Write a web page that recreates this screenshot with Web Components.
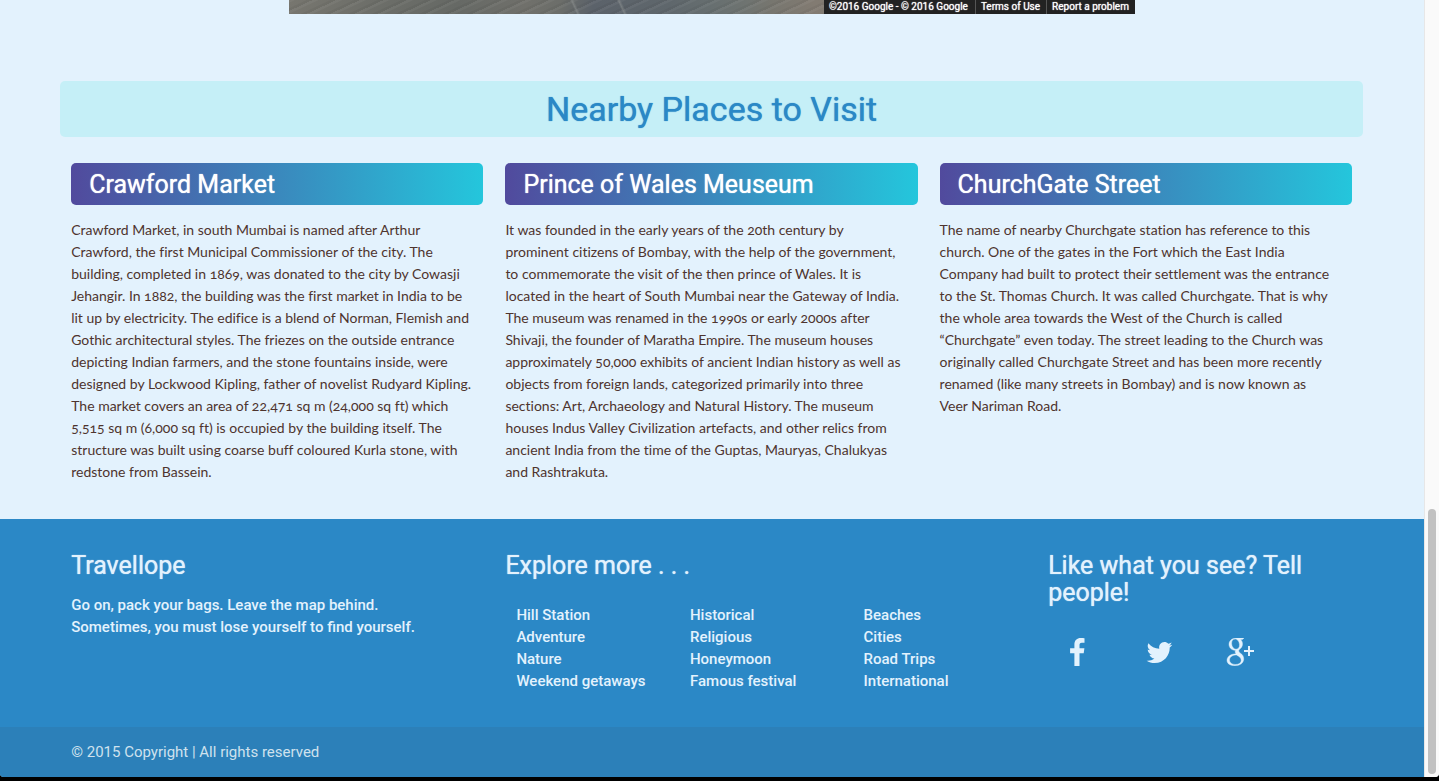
<!DOCTYPE html>
<html lang="en">
<head>
<meta charset="utf-8">
<title>Travellope</title>
<style>
html, body { margin: 0; }
body { font-family: Roboto, "Liberation Sans", sans-serif; font-size: 15px; line-height: 22px; background: #000; }
</style>
</head>
<body>
<travel-page></travel-page>

<template id="t-page">
<style>
:host { display: grid; grid-template-columns: minmax(0, 1fr) 15px; min-height: calc(100vh - 4px); background: #e3f2fd; border-radius: 0 0 4px 4px; overflow: hidden; }
main { display: flex; flex-direction: column; }
.container { width: 90%; margin: 0 auto; }
.row { margin: 0 -10px 0 -11px; }
.places { display: grid; grid-template-columns: repeat(3, minmax(0, 1fr)); margin-top: 26px; margin-bottom: 36px; }
section-title { margin-top: 67px; }
</style>
<main>
  <div class="container">
    <street-view></street-view>
    <div class="row">
      <section-title>Nearby Places to Visit</section-title>
      <div class="places">
        <place-card name="Crawford Market">Crawford Market, in south Mumbai is named after Arthur<br>Crawford, the first Municipal Commissioner of the city. The<br>building, completed in 1869, was donated to the city by Cowasji<br>Jehangir. In 1882, the building was the first market in India to be<br>lit up by electricity. The edifice is a blend of Norman, Flemish and<br>Gothic architectural styles. The friezes on the outside entrance<br>depicting Indian farmers, and the stone fountains inside, were<br>designed by Lockwood Kipling, father of novelist Rudyard Kipling.<br>The market covers an area of 22,471 sq m (24,000 sq ft) which<br>5,515 sq m (6,000 sq ft) is occupied by the building itself. The<br>structure was built using coarse buff coloured Kurla stone, with<br>redstone from Bassein.</place-card>
        <place-card name="Prince of Wales Meuseum">It was founded in the early years of the 20th century by<br>prominent citizens of Bombay, with the help of the government,<br>to commemorate the visit of the then prince of Wales. It is<br>located in the heart of South Mumbai near the Gateway of India.<br>The museum was renamed in the 1990s or early 2000s after<br>Shivaji, the founder of Maratha Empire. The museum houses<br>approximately 50,000 exhibits of ancient Indian history as well as<br>objects from foreign lands, categorized primarily into three<br>sections: Art, Archaeology and Natural History. The museum<br>houses Indus Valley Civilization artefacts, and other relics from<br>ancient India from the time of the Guptas, Mauryas, Chalukyas<br>and Rashtrakuta.</place-card>
        <place-card name="ChurchGate Street">The name of nearby Churchgate station has reference to this<br>church. One of the gates in the Fort which the East India<br>Company had built to protect their settlement was the entrance<br>to the St. Thomas Church. It was called Churchgate. That is why<br>the whole area towards the West of the Church is called<br>“Churchgate” even today. The street leading to the Church was<br>originally called Churchgate Street and has been more recently<br>renamed (like many streets in Bombay) and is now known as<br>Veer Nariman Road.</place-card>
      </div>
    </div>
  </div>
  <site-footer></site-footer>
</main>
<scroll-track></scroll-track>
</template>

<template id="t-street">
<style>
:host { display: flex; justify-content: flex-end; width: 66%; height: 14px; margin: 0 auto; font-size: 10px; line-height: 14px; text-shadow: 0 0 1px currentColor; color: #fff; overflow: hidden;
  background:
    linear-gradient(65deg, transparent 33.7%, #92969580 33.9%, transparent 34.2%, transparent 39.2%, #92969580 39.4%, transparent 39.7%),
    repeating-linear-gradient(155deg, #ffffff0c 0 2px, transparent 3px 7px, #0000000c 8px 10px),
    linear-gradient(100deg, #77766f 0, #6b6d68 12%, #666965 20%, #70706b 28%, #6c6e6a 32%, #5b626a 36%, #5f676c 45%, #676f70 50%, #6f7471 54%, #77766f 57%, #827b72 62%, #77736a 100%); }
span, a { padding: 0 6px 0 5px; background: #222; color: inherit; text-decoration: none; white-space: nowrap; }
span { padding-right: 7px; }
a { border-left: 1px solid #555; }
</style>
<span>©2016 Google - © 2016 Google</span><a href="#terms">Terms of Use</a><a href="#report">Report a problem</a>
</template>

<template id="t-title">
<style>
:host { display: block; background: #c5eff7; border-radius: 5px; }
h2 { margin: 0; font: 400 34px/56px Roboto, sans-serif; color: #2b88c6; text-align: center; text-shadow: 0 0 1px currentColor; }
</style>
<h2><slot></slot></h2>
</template>

<template id="t-place">
<style>
:host { display: block; padding: 0 11px; }
h3 { margin: 0 0 14px; padding: 2px 0 0 18px; border-radius: 5px; background: linear-gradient(to right, #514a9d, #24c6dc); color: #fff; font-size: 25px; line-height: 40px; font-weight: 400; text-shadow: 0 0 1px currentColor; }
p { margin: 0; font-family: Lato, sans-serif; font-size: 14px; font-variant-ligatures: none; font-variant-numeric: oldstyle-nums; color: #4e342e; white-space: nowrap; }
</style>
<h3></h3><p><slot></slot></p>
</template>

<template id="t-footer">
<style>
:host { display: flex; flex-direction: column; flex: 1; background: #2b88c6; color: #e3f2fd; }
.container { width: 90%; margin: 0 auto; }
.cols { display: grid; grid-template-columns: 4fr 5fr 3fr; margin: 0 -10px 0 -11px; padding: 33px 0 35px; }
section { padding: 0 11px; min-width: 0; }
h4 { margin: 0; font-size: 25px; line-height: 27px; font-weight: 400; text-shadow: 0 0 1px currentColor; }
p { margin: 15px 0 0; font-weight: 500; }
.lists { display: grid; grid-template-columns: repeat(3, 1fr); margin-top: 25px; }
ul { list-style: none; margin: 0; padding: 0 0 0 11px; font-weight: 500; white-space: nowrap; }
a { color: inherit; text-decoration: none; }
.icons { display: grid; grid-template-columns: repeat(4, 1fr); justify-items: center; margin: 32px -11px 0 -12px; }
.icons a { display: block; height: 28px; }
svg { display: block; width: 28px; height: 28px; fill: currentColor; }
.copy { background: #2c80b9; color: #cfe2ee; line-height: 50px; margin-top: auto; }
</style>
<div class="container"><div class="cols">
  <section><h4>Travellope</h4><p>Go on, pack your bags. Leave the map behind.<br>Sometimes, you must lose yourself to find yourself.</p></section>
  <section><h4>Explore more . . .</h4>
    <div class="lists">
      <ul><li><a href="#hill">Hill Station</a></li><li><a href="#adventure">Adventure</a></li><li><a href="#nature">Nature</a></li><li><a href="#weekend">Weekend getaways</a></li></ul>
      <ul><li><a href="#historical">Historical</a></li><li><a href="#religious">Religious</a></li><li><a href="#honeymoon">Honeymoon</a></li><li><a href="#festival">Famous festival</a></li></ul>
      <ul><li><a href="#beaches">Beaches</a></li><li><a href="#cities">Cities</a></li><li><a href="#road">Road Trips</a></li><li><a href="#international">International</a></li></ul>
    </div>
  </section>
  <section><h4>Like what you see? Tell people!</h4>
    <div class="icons">
      <a href="#facebook" aria-label="Facebook"><svg viewBox="0 0 28 28"><path d="M21.500 .3V4.700H18.900C16.900 4.700 16.500 5.700 16.500 7.100V10.200H21.400L20.700 15.200H16.500V28H11.400V15.200H7.100V10.200H11.400V6.600C11.400 2.400 14 .1 17.700 .1C19.500 .1 21 .2 21.500 .3Z"/></svg></a>
      <a href="#twitter" aria-label="Twitter"><svg viewBox="0 0 28 28"><path d="M27.300 6.700c-.7 1-1.600 1.900-2.600 2.700v.7c0 7-5.300 15-15 15-3 0-5.800-.9-8.100-2.400 2.800.3 5.600-.5 7.800-2.200-2.300-.1-4.300-1.600-4.900-3.700.8.1 1.600.1 2.400-.1-2.400-.5-4.200-2.700-4.200-5.200.7.400 1.500.7 2.400.7C2.700 10.600 2 7.700 3.400 5.200c2.600 3.200 6.500 5.300 10.900 5.500C13.500 7.300 16 4.100 19.400 4.100c1.500 0 2.900.6 3.900 1.700 1.200-.2 2.300-.7 3.300-1.300-.4 1.200-1.200 2.300-2.300 2.900 1.100-.1 2.100-.4 3-.7Z"/></svg></a>
      <a href="#google-plus" aria-label="Google plus"><svg viewBox="0 0 28 28"><path stroke="currentColor" stroke-width=".4" fill-rule="evenodd" d="M18 0H10.500C6.200 0 3 2.800 3 6.300c0 3.400 2.600 6 6.500 6-.6 1.500-.3 2.600.6 3.500C5 15.900 1 18.500 1 22.300c0 3.300 3 5.400 7.700 5.400 5.700 0 9-3 9-6.700 0-2.800-1-4.200-3.600-6.100-1.600-1.200-2-2.400-.4-3.800C15.400 9.800 16.500 8.200 16.500 5.900c0-1.900-.7-3.400-2.100-4.500h2ZM9.200 1.100c2.200 0 4 2.300 4.300 5.400.2 2.900-1.200 4.700-3.500 4.700S5.900 8.900 5.600 5.800C5.400 3 6.800 1.100 9.200 1.100ZM10.500 17c3 1.500 4.700 3 4.700 5.300 0 2.500-2 4.200-5.800 4.200-3.500 0-5.900-1.900-5.900-4.500C3.500 19 6.500 17 10.500 17Z"/><path d="M22 8h2v4H28v2h-4V18h-2v-4h-4v-2h4Z"/></svg></a>
    </div>
  </section>
</div></div>
<div class="copy"><div class="container">© 2015 Copyright | All rights reserved</div></div>
</template>

<template id="t-scroll">
<style>
:host { display: grid; grid-template-rows: 509fr 265fr 3px; background: #fafafa; border-left: 1px solid #e7e7e7; box-sizing: border-box; padding: 0 3px; }
div { grid-row: 2; background: #c1c1c1; border-radius: 4px; }
</style>
<div></div>
</template>

<script>
const define = (name, id, setup) => customElements.define(name, class extends HTMLElement {
  constructor() {
    super();
    this.attachShadow({ mode: "open" }).append(document.getElementById(id).content.cloneNode(true));
  }
  connectedCallback() { if (setup) setup(this); }
});
define("street-view", "t-street");
define("section-title", "t-title");
define("place-card", "t-place", el => { el.shadowRoot.querySelector("h3").textContent = el.getAttribute("name"); });
define("site-footer", "t-footer");
define("scroll-track", "t-scroll");
define("travel-page", "t-page");
</script>
</body>
</html>
